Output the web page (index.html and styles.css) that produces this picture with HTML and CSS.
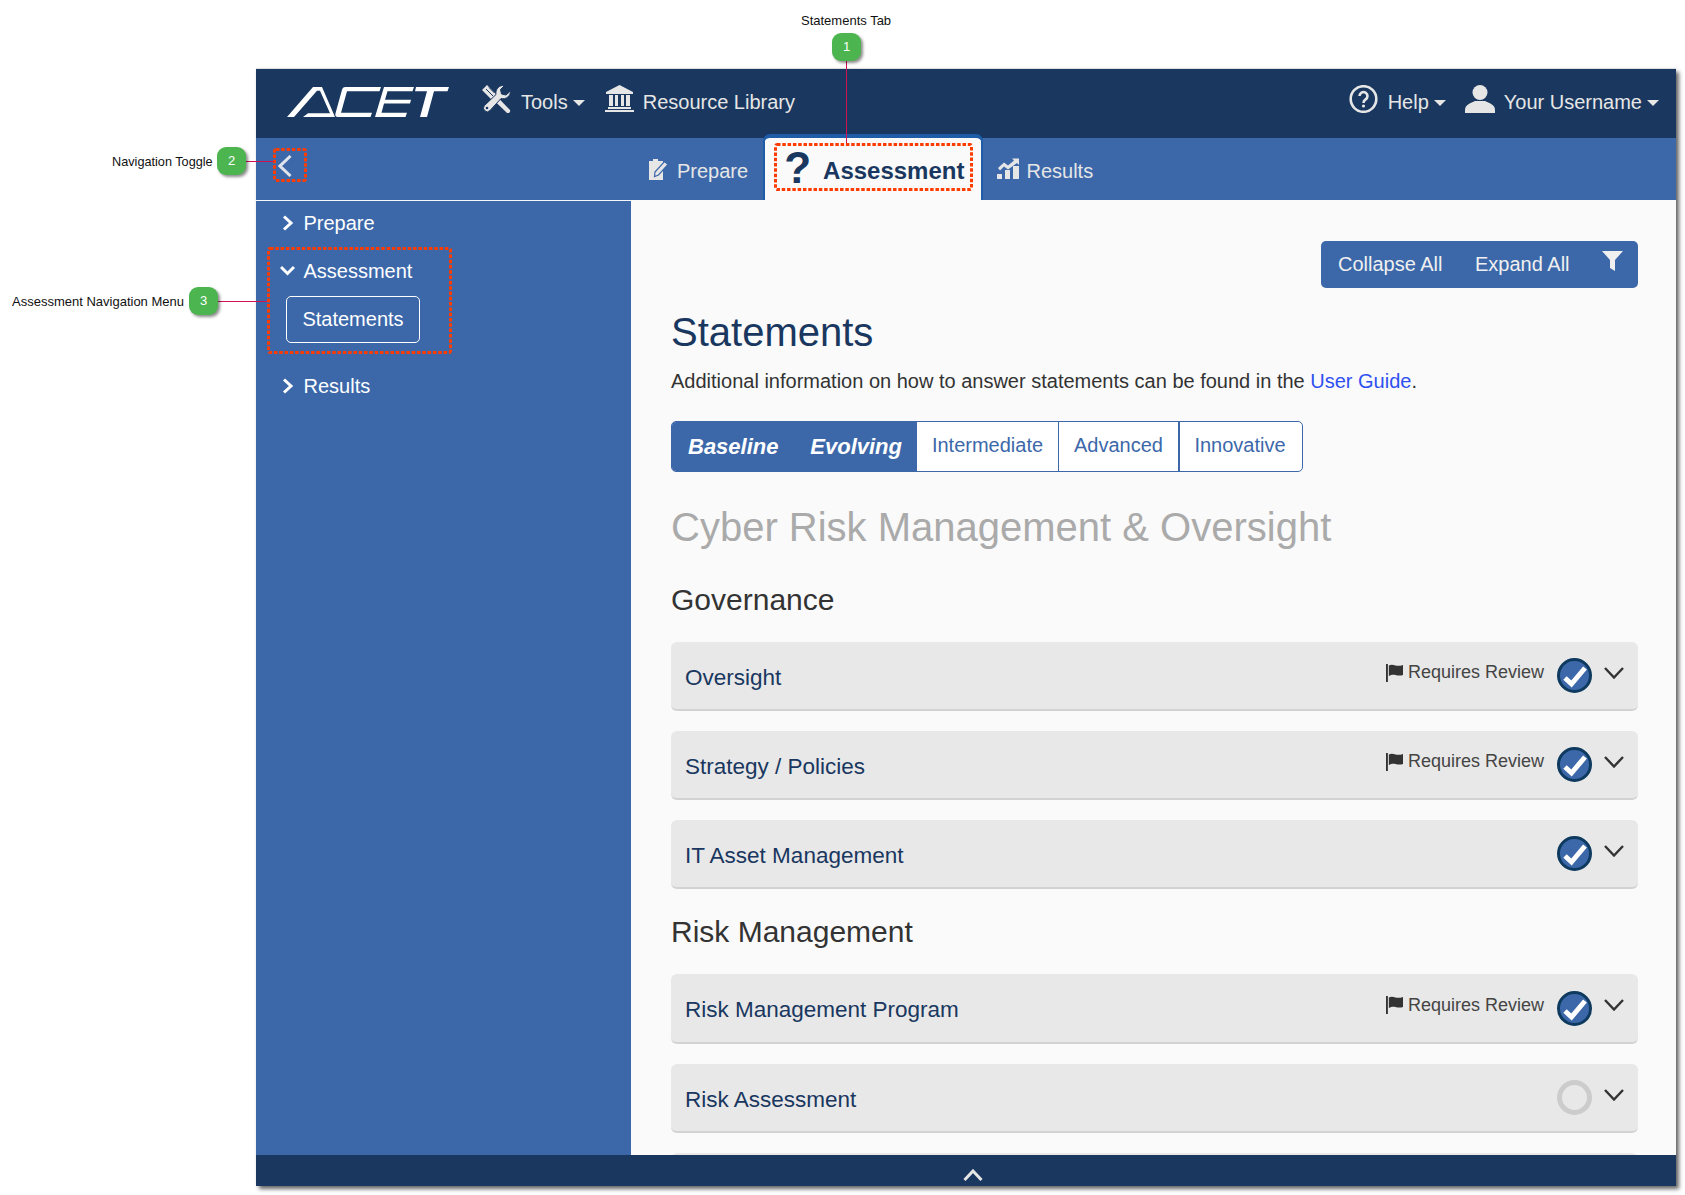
FILE: index.html
```html
<!DOCTYPE html>
<html lang="en">
<head>
<meta charset="utf-8">
<title>ACET Statements</title>
<link rel="stylesheet" href="styles.css">
</head>
<body>
<div class="window">
  <header class="topbar">
    <svg class="logo" viewBox="0 0 162 30" preserveAspectRatio="none" aria-label="ACET"><path class="logo-fill" d="M0 29 L26 1 H35 L48 29 H16 L21 25.500 H43 L33 4.500 H30 L7 29 Z"/><path class="logo-fill" d="M58 1 H94 L92.500 5 H60 L54 25 H85 L83.500 29 H51 Q47.500 29 48.500 25.500 L55 3.500 Q55.500 1 58 1 Z"/><path class="logo-fill" d="M97 1 H127 L125.500 5 H100.500 L98 13 H124 L123 16.500 H97 L94.500 25 H120 L118.500 29 H88 Z"/><path class="logo-fill" d="M129 1 H162 L160.500 5 H147 L140 29 H133 L140 5 H128 Z"/></svg>
    <a class="nav-item nav-tools">
      <svg class="ico" width="29" height="28" viewBox="0 0 29 28"><path d="M0 5 L5 0 L14 9 L14.500 11 L26 23 L28 25 A2.300 2.300 0 0 1 25 28 L23 26 L11 14.500 L9 14 Z"/><path class="tool-line" d="M4 4 L11 11 M7 2.500 L12.500 8"/><path class="wrench" d="M28.500 6 A7.500 7.500 0 0 1 19 13.500 L8 25.500 A3.600 3.600 0 0 1 2.500 20.500 L14 9.500 A7.500 7.500 0 0 1 22.500 0.500 L18.500 4.500 L19.500 9 L24 10 Z"/><circle class="hole" cx="5" cy="23" r="1.300"/></svg>
      <span>Tools</span><i class="caret"></i>
    </a>
    <a class="nav-item nav-lib">
      <svg class="ico" width="29" height="27" viewBox="0 0 29 27"><path d="M14.500 0 L28 7 V9 H1 V7 Z"/><path d="M4 10 H8 V21 H4 Z M10 10 H13 V21 H10 Z M16 10 H19 V21 H16 Z M21 10 H25 V21 H21 Z M3 22 H26 V24 H3 Z M0 25 H29 V27 H0 Z"/></svg>
      <span>Resource Library</span>
    </a>
    <a class="nav-item nav-help">
      <svg class="ico" width="29" height="28" viewBox="0 0 29 28"><circle class="ring" cx="14.500" cy="14" r="12.800"/><path class="q" d="M10.500 11 A4 4 0 1 1 16.500 14.500 C15 15.400 14.500 16 14.500 18"/><circle cx="14.500" cy="21" r="1.600"/></svg>
      <span>Help</span><i class="caret"></i>
    </a>
    <a class="nav-item nav-user">
      <svg class="ico" width="30" height="28" viewBox="0 0 30 28"><circle cx="15" cy="7.500" r="7.500"/><path d="M0 28 V25 C0 19 6 18.500 10 16 H20 C24 18.500 30 19 30 25 V28 Z"/></svg>
      <span>Your Username</span><i class="caret"></i>
    </a>
  </header>

  <nav class="subbar">
    <div class="toggle-cell">
      <svg class="toggle" width="14" height="22" viewBox="0 0 14 22"><path d="M12.500 1 L2 11 L12.500 21"/></svg>
    </div>
    <a class="tab tab-prepare">
      <svg class="ico" width="20" height="22" viewBox="0 0 20 22"><path d="M1 3 H5 V1 H10 V3 H15 V22 H1 Z"/><path class="pen" d="M7 14 L16.500 3.500 L20 6.500 L10.500 17 L6.500 18.500 Z"/></svg>
      <span>Prepare</span>
    </a>
    <a class="tab tab-active">
      <span class="tab-q">?</span>
      <span>Assessment</span>
    </a>
    <a class="tab tab-results">
      <svg class="ico" width="22" height="21" viewBox="0 0 22 21"><path d="M0 16 H5 V21 H0 Z M8 12 H13 V21 H8 Z M16 8 H22 V21 H16 Z"/><path d="M1 10 L7 4.500 L11 7.500 L17 2.500 L15 0.500 H22 V7 L20 5 L11 11.500 L7 8.500 L3 12.500 Z"/></svg>
      <span>Results</span>
    </a>
  </nav>

  <div class="body">
    <aside class="sidebar">
      <a class="side-item side-first"><svg class="side-chev" width="15" height="16" viewBox="0 0 15 16"><path d="M3 1.500 L10 8 L3 14.500"/></svg><span>Prepare</span></a>
      <a class="side-item side-open"><svg class="side-chev" width="15" height="16" viewBox="0 0 15 16"><path d="M1 4 L7.500 10.500 L14 4"/></svg><span>Assessment</span></a>
      <a class="side-btn">Statements</a>
      <a class="side-item side-last"><svg class="side-chev" width="15" height="16" viewBox="0 0 15 16"><path d="M3 1.500 L10 8 L3 14.500"/></svg><span>Results</span></a>
    </aside>

    <main class="main">
      <div class="toolbar-wrap">
        <div class="toolbar">
          <span class="tool tool-collapse">Collapse All</span>
          <span class="tool tool-expand">Expand All</span>
          <span class="tool tool-filter"><svg width="21" height="20" viewBox="0 0 21 20"><path d="M0 0 H21 L13 9 V20 L8 17 V9 Z"/></svg></span>
        </div>
      </div>
      <h1 class="title">Statements</h1>
      <p class="intro">Additional information on how to answer statements can be found in the <a class="link">User Guide</a>.</p>
      <div class="levels">
        <span class="level level-on"><b>Baseline</b><b>Evolving</b></span>
        <span class="level l-int">Intermediate</span>
        <span class="level l-adv">Advanced</span>
        <span class="level l-inn">Innovative</span>
      </div>
      <h2 class="domain">Cyber Risk Management &amp; Oversight</h2>
      <h3 class="section">Governance</h3>
      <div class="row">
        <span class="row-title">Oversight</span>
        <span class="review"><svg width="17" height="18" viewBox="0 0 18 18" preserveAspectRatio="none"><path d="M0 0 H2 V18 H0 Z M3 1.500 C6 0 8 1 10 1.500 S15 2 18 1 V11 C15 12 12.500 11.500 10 11 S6 10.500 3 12 Z"/></svg>Requires Review</span>
        <svg class="check" width="35" height="35" viewBox="0 0 35 35"><circle cx="17.500" cy="17.500" r="16"/><path d="M8 20 L14.500 26 L28 10"/></svg>
        <svg class="chev" width="20" height="12" viewBox="0 0 20 12"><path d="M1 1 L10 10.500 L19 1"/></svg>
      </div>
      <div class="row">
        <span class="row-title">Strategy / Policies</span>
        <span class="review"><svg width="17" height="18" viewBox="0 0 18 18" preserveAspectRatio="none"><path d="M0 0 H2 V18 H0 Z M3 1.500 C6 0 8 1 10 1.500 S15 2 18 1 V11 C15 12 12.500 11.500 10 11 S6 10.500 3 12 Z"/></svg>Requires Review</span>
        <svg class="check" width="35" height="35" viewBox="0 0 35 35"><circle cx="17.500" cy="17.500" r="16"/><path d="M8 20 L14.500 26 L28 10"/></svg>
        <svg class="chev" width="20" height="12" viewBox="0 0 20 12"><path d="M1 1 L10 10.500 L19 1"/></svg>
      </div>
      <div class="row">
        <span class="row-title">IT Asset Management</span>
        <svg class="check" width="35" height="35" viewBox="0 0 35 35"><circle cx="17.500" cy="17.500" r="16"/><path d="M8 20 L14.500 26 L28 10"/></svg>
        <svg class="chev" width="20" height="12" viewBox="0 0 20 12"><path d="M1 1 L10 10.500 L19 1"/></svg>
      </div>
      <h3 class="section section-2">Risk Management</h3>
      <div class="row row-tall">
        <span class="row-title">Risk Management Program</span>
        <span class="review"><svg width="17" height="18" viewBox="0 0 18 18" preserveAspectRatio="none"><path d="M0 0 H2 V18 H0 Z M3 1.500 C6 0 8 1 10 1.500 S15 2 18 1 V11 C15 12 12.500 11.500 10 11 S6 10.500 3 12 Z"/></svg>Requires Review</span>
        <svg class="check" width="35" height="35" viewBox="0 0 35 35"><circle cx="17.500" cy="17.500" r="16"/><path d="M8 20 L14.500 26 L28 10"/></svg>
        <svg class="chev" width="20" height="12" viewBox="0 0 20 12"><path d="M1 1 L10 10.500 L19 1"/></svg>
      </div>
      <div class="row">
        <span class="row-title">Risk Assessment</span>
        <span class="pending"></span>
        <svg class="chev" width="20" height="12" viewBox="0 0 20 12"><path d="M1 1 L10 10.500 L19 1"/></svg>
      </div>
      <div class="row"></div>
    </main>
  </div>

  <footer class="footer">
    <svg width="20" height="12" viewBox="0 0 20 12"><path d="M1.500 11 L10 2 L18.500 11"/></svg>
  </footer>
</div>

<svg class="mark mark-tab"><rect/></svg>
<svg class="mark mark-toggle"><rect/></svg>
<svg class="mark mark-menu"><rect/></svg>
<div class="lead lead-1"></div>
<div class="lead lead-2"></div>
<div class="lead lead-3"></div>
<div class="callout-label label-1">Statements Tab</div>
<div class="callout-label label-2">Navigation Toggle</div>
<div class="callout-label label-3">Assessment Navigation Menu</div>
<div class="badge badge-1">1</div>
<div class="badge badge-2">2</div>
<div class="badge badge-3">3</div>
</body>
</html>
```

FILE: styles.css
```css
* { box-sizing: border-box; }
html, body { margin: 0; padding: 0; }
body {
  position: relative;
  width: 1685px;
  height: 1195px;
  overflow: hidden;
  background: #fff;
  font-family: "Liberation Sans", Arial, sans-serif;
  font-size: 20px;
  color: #333;
}
.window {
  position: absolute;
  left: 256px;
  top: 69px;
  width: 1420px;
  height: 1117px;
  display: flex;
  flex-direction: column;
  box-shadow: 3px 3px 4px rgba(0, 0, 0, .6), 0 -1px 1px rgba(0, 0, 0, .1);
}

/* top bar */
.topbar {
  flex: none;
  height: 69px;
  background: #19375f;
  color: #e6e6e6;
  display: flex;
  align-items: center;
  padding-left: 31px;
}
.logo { width: 162px; height: 32px; flex: none; margin-top: -3px; }
.logo-fill { fill: #fff; }
.nav-item { display: flex; align-items: center; line-height: 30px; }
.ico { fill: #e6e6e6; flex: none; display: block; }
.ico .hole { fill: #19375f; }
.ico .ring, .ico .q { fill: none; stroke: #e6e6e6; stroke-width: 2.600; }
.ico .tool-line { fill: none; stroke: #19375f; stroke-width: 1; }
.ico .wrench { stroke: #19375f; stroke-width: 1; }
.ico .pen { stroke: #3c68aa; stroke-width: 1.200; }
.nav-tools { margin-left: 33px; }
.nav-tools .ico { margin-right: 10px; margin-top: -10px; }
.nav-lib { margin-left: 20px; }
.nav-lib .ico { margin-right: 9px; margin-top: -11px; }
.nav-help { margin-left: auto; }
.nav-help .ico { margin-right: 10px; margin-top: -10px; }
.nav-user { margin-left: 19px; margin-right: 17px; }
.nav-user .ico { margin-right: 9px; margin-top: -10px; }
.nav-item span { position: relative; top: -2px; }
.caret {
  width: 0;
  height: 0;
  margin-left: 5px;
  margin-top: -2px;
  border-left: 6px solid transparent;
  border-right: 6px solid transparent;
  border-top: 6px solid #e6e6e6;
}

/* sub bar */
.subbar {
  flex: none;
  height: 62px;
  background: #3c68aa;
  color: #e6e6e6;
  display: flex;
}
.toggle-cell { flex: none; width: 375px; padding: 17px 0 0 22px; }
.toggle { display: block; }
.toggle path { fill: none; stroke: #dfe3ea; stroke-width: 3; }
.tab { display: flex; align-items: center; }
.tab-prepare { padding: 4px 15px 0 17px; }
.tab-prepare .ico { margin-right: 9px; margin-top: -4px; }
.tab-results { padding: 4px 17px 0 14px; }
.tab-results .ico { margin-right: 7px; margin-top: -5px; }
.tab-active {
  margin-top: -4px;
  height: 66px;
  padding: 4px 17px 0 19px;
  background: #fafafa;
  color: #19375f;
  font-size: 24px;
  font-weight: bold;
  border: 2px solid #1f5ca8;
  border-top-width: 4px;
  border-bottom: 0;
  border-radius: 7px 7px 0 0;
}
.tab-q { font-size: 44px; line-height: 44px; margin-right: 12px; margin-top: -6px; }

/* body */
.body { flex: 1; display: flex; min-height: 0; }
.sidebar {
  flex: none;
  width: 375px;
  background: #3c68aa;
  border-top: 1px solid #f4f6fa;
  color: #fff;
  padding-top: 7px;
}
.side-item { display: flex; align-items: center; line-height: 30px; padding-left: 25px; }
.side-chev { margin-right: 7.500px; flex: none; }
.side-chev path { fill: none; stroke: #fff; stroke-width: 3; }
.side-open { margin-top: 18px; padding-left: 24px; }
.side-open .side-chev { margin-right: 8.500px; }
.side-btn {
  display: block;
  width: 134px;
  height: 47px;
  margin: 10px 0 0 30px;
  border: 1px solid #fff;
  border-radius: 5px;
  line-height: 45px;
  text-align: center;
}
.side-last { margin-top: 28px; }

.main {
  flex: 1;
  min-width: 0;
  overflow: hidden;
  background: #fafafa;
  padding: 41px 38px 0 40px;
}
.toolbar-wrap { display: flex; justify-content: flex-end; }
.toolbar {
  display: flex;
  height: 47px;
  background: #3c68aa;
  border-radius: 5px;
  color: #f0f0f0;
  line-height: 46px;
}
.tool-collapse { width: 136px; padding-left: 17px; }
.tool-expand { width: 130px; padding-left: 18px; }
.tool-filter { width: 51px; padding: 10px 0 0 15px; }
.tool-filter svg { display: block; fill: #f0f0f0; }
.title {
  margin: 20px 0 0;
  font-size: 40px;
  font-weight: normal;
  line-height: 48px;
  color: #19375f;
}
.intro { margin: 10px 0 0; line-height: 30px; color: #333; }
.link { color: #2f50f0; }
.levels {
  display: flex;
  width: 632px;
  height: 51px;
  margin-top: 25px;
  border: 1px solid #3c68aa;
  border-radius: 5px;
  overflow: hidden;
  background: #fff;
  color: #3c68aa;
  line-height: 46px;
}
.level { display: block; text-align: center; }
.level-on {
  width: 245px;
  background: #3c68aa;
  color: #fff;
  font-size: 22px;
  font-style: italic;
  line-height: 50px;
  display: flex;
  justify-content: space-between;
  padding: 0 15px 0 16px;
}
.l-int { width: 142px; border-right: 1px solid #3c68aa; }
.l-adv { width: 121px; border-right: 2px solid #3c68aa; }
.l-inn { flex: 1; padding-right: 2px; }
.domain {
  margin: 31px 0 0;
  font-size: 40px;
  font-weight: normal;
  line-height: 48px;
  color: #aaa;
}
.section {
  margin: 31px 0 24px;
  font-size: 30px;
  font-weight: normal;
  line-height: 36px;
  color: #333;
}
.section-2 { margin-top: 25px; }
.row {
  display: flex;
  align-items: center;
  height: 69px;
  margin-bottom: 20px;
  padding: 0 14px;
  background: #e8e8e8;
  border-bottom: 2px solid #d2d2d2;
  border-radius: 6px;
}
.row-tall { height: 70px; }
.row-title { margin-right: auto; margin-top: 4px; font-size: 22.500px; color: #19375f; }
.review {
  display: flex;
  align-items: center;
  margin-bottom: 6px;
  font-size: 18px;
  color: #444;
}
.review svg { fill: #333; margin-right: 5px; }
.check { margin-left: 13px; flex: none; }
.check circle { fill: #3c68aa; stroke: #0f3a5f; stroke-width: 3; }
.check path { fill: none; stroke: #fff; stroke-width: 5; }
.pending {
  width: 35px;
  height: 35px;
  margin-left: 13px;
  border: 5px solid #ccc;
  border-radius: 50%;
}
.chev { margin: 0 0 6px 12px; flex: none; }
.chev path { fill: none; stroke: #333; stroke-width: 2.400; }

.footer {
  flex: none;
  height: 31px;
  background: #19375f;
  padding: 14px 0 0 707px;
}
.footer svg { display: block; }
.footer path { fill: none; stroke: #e6e6e6; stroke-width: 3; }

/* callout overlay */
.mark { position: absolute; overflow: visible; }
.mark rect {
  x: 1.500px;
  y: 1.500px;
  width: calc(100% - 3px);
  height: calc(100% - 3px);
  rx: 1.500px;
  fill: none;
  stroke: #ff3c00;
  stroke-width: 3;
  stroke-dasharray: 3.500 1.800;
}
.mark-tab { left: 774px; top: 143px; width: 199px; height: 48px; }
.mark-toggle { left: 273px; top: 148px; width: 34px; height: 34px; }
.mark-menu { left: 267px; top: 247px; width: 185px; height: 107px; }
.lead { position: absolute; background: #d0134f; }
.lead-1 { left: 846px; top: 61px; width: 1px; height: 82px; }
.lead-2 { left: 245px; top: 161px; width: 29px; height: 1px; }
.lead-3 { left: 217px; top: 301px; width: 50px; height: 1px; }
.callout-label {
  position: absolute;
  font-size: 13px;
  line-height: 16px;
  color: #111;
  white-space: nowrap;
}
.label-1 { left: 801px; top: 13px; }
.label-2 { left: 112px; top: 154px; font-size: 12.700px; }
.label-3 { left: 12px; top: 294px; }
.badge {
  position: absolute;
  width: 29px;
  height: 28px;
  border-radius: 9px;
  background: #4cb54f;
  color: #fff;
  font-size: 13px;
  line-height: 28px;
  text-align: center;
  box-shadow: 2px 2px 3px rgba(0, 0, 0, .45);
}
.badge-1 { left: 832px; top: 33px; }
.badge-2 { left: 217px; top: 147px; }
.badge-3 { left: 189px; top: 287px; }
```
